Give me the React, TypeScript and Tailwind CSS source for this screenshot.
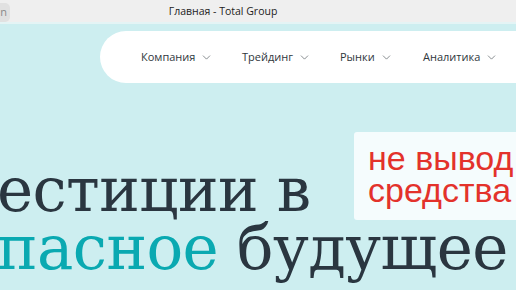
import { ChevronDown } from "lucide-react";

const navItems = [
  { label: "Компания", w: "w-[101px]" },
  { label: "Трейдинг", w: "w-[98px]" },
  { label: "Рынки", w: "w-[83px]" },
  { label: "Аналитика", w: "w-[90px]" },
];

export default function App() {
  return (
    <div className="relative h-[290px] w-[516px] overflow-hidden bg-[#cdeef0]">
      {/* window title bar */}
      <div className="relative flex h-[24px] items-center justify-center border-b-2 border-[#e4f4f5] bg-[#efefef]">
        <div className="absolute left-[-10px] top-[3px] flex h-[19px] w-[20px] items-center justify-end rounded-[5px] bg-[#e1e1e1] pr-[3px] text-[11px] text-[#8a8a8a] [font-family:'Open_Sans',sans-serif]">
          n
        </div>
        <span className="ml-[-70px] mt-[2px] text-[10.5px] text-[#222] [font-family:'Open_Sans',sans-serif]">Главная - Total Group</span>
      </div>

      {/* nav pill */}
      <nav className="ml-[100px] mt-[7px] flex h-[52px] items-center rounded-l-[26px] bg-white pl-[41px]">
        {navItems.map((item) => (
          <div
            key={item.label}
            className={`flex shrink-0 items-center gap-[5px] text-[11px] text-[#2f373c] [font-family:'Open_Sans',sans-serif] ${item.w}`}
          >
            {item.label}
            <ChevronDown size={13} strokeWidth={1.1} className="mt-[1px] text-[#3a4247]" />
          </div>
        ))}
      </nav>

      {/* headline */}
      <h1 className="mt-[78px] text-[61px] leading-[58px] tracking-[-0.6px] text-[#2a3640] [font-family:'DejaVu_Serif',serif]">
        <div className="ml-[-3px] whitespace-nowrap">естиции в</div>
        <div className="ml-[-3px] whitespace-nowrap">
          <span className="text-[#0aa9b1]">пасное</span> будущее
        </div>
      </h1>

      {/* red sticker */}
      <div className="absolute left-[354px] top-[132px] h-[88px] w-[180px] rounded-[3px] bg-[#f5fcfd] pl-[14px] pt-[10px] text-[34px] leading-[32px] text-[#e3322b] [font-family:'Liberation_Sans',sans-serif]">
        <div className="whitespace-nowrap">не вывод</div>
        <div className="whitespace-nowrap">средства</div>
      </div>
    </div>
  );
}
